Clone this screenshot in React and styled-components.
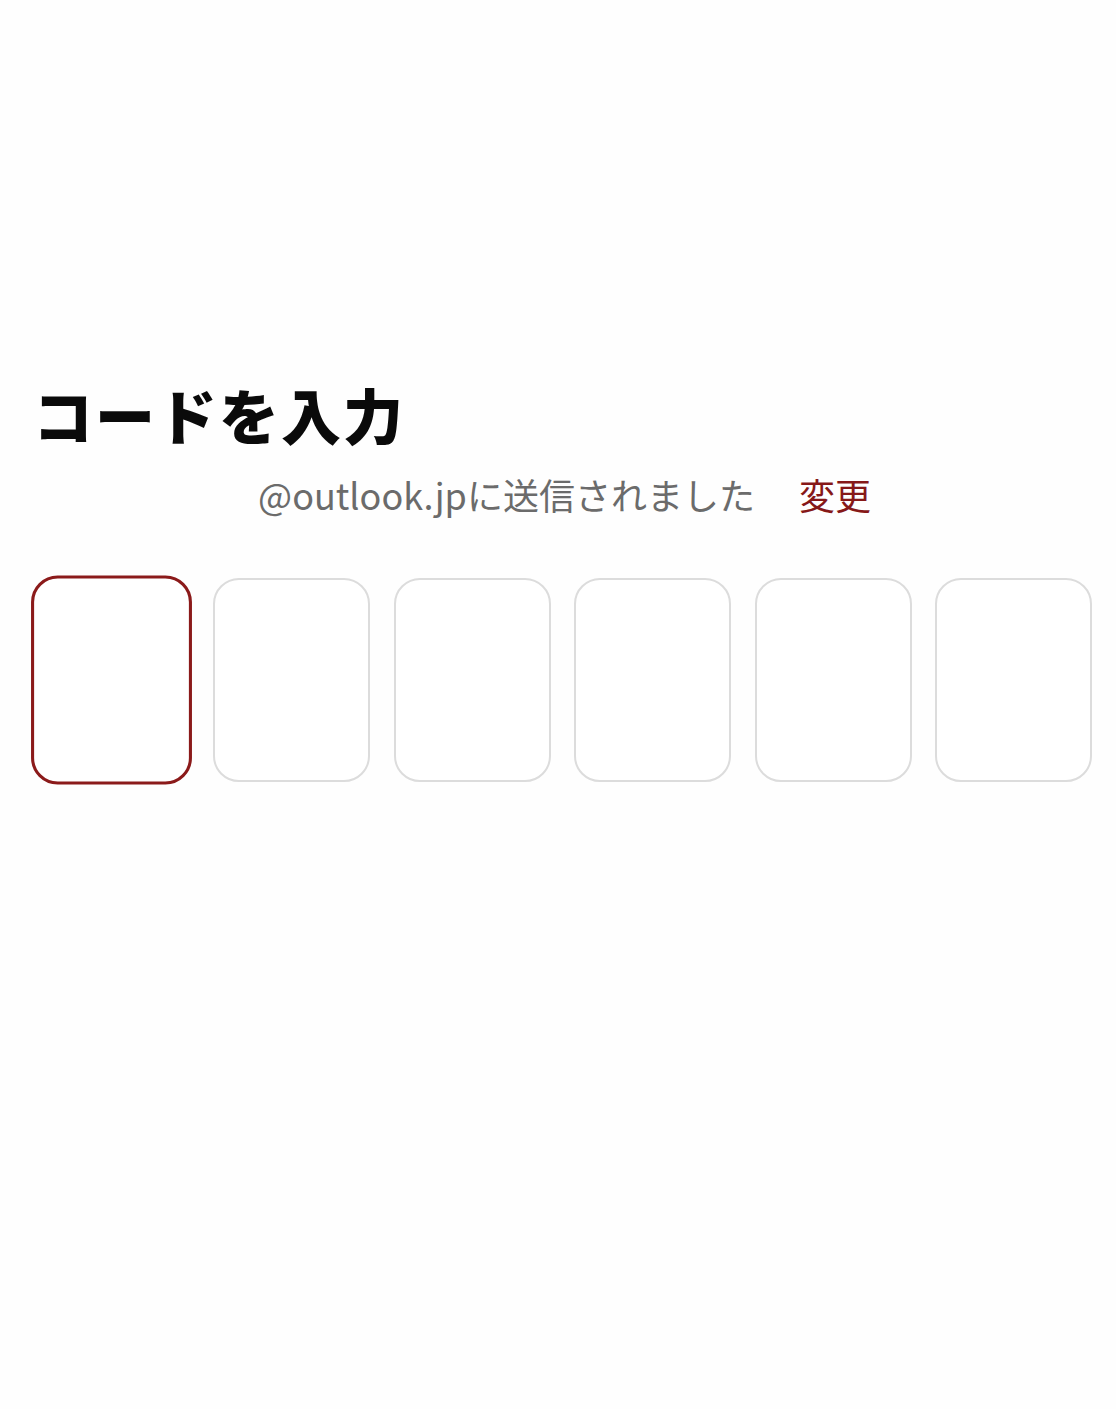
import React from 'react'
import styled, { createGlobalStyle } from 'styled-components'

const GlobalStyle = createGlobalStyle`
  html, body {
    margin: 0;
    padding: 0;
    background: #fefefe;
  }
  body {
    font-family: "Noto Sans CJK JP", "Noto Sans", sans-serif;
  }
`;

const Page = styled.div`
  min-height: 1409px;
  padding: 378px 24px 0 33px;
  box-sizing: border-box;
`;

const Title = styled.h1`
  margin: 0;
  font-size: 60px;
  font-weight: 900;
  line-height: 1.2;
  color: #0a0a0a;
  letter-spacing: 2px;
`;

const Sub = styled.p`
  margin: 21px 0 0;
  padding-left: 4px;
  text-align: center;
  font-size: 36px;
  line-height: 1.3;
  color: #6b6b6b;
`;

const Change = styled.span`
  margin-left: 44px;
  color: #861818;
`;

const CodeRow = styled.div`
  display: flex;
  gap: 23.5px;
  margin-top: 60px;
`;

const CodeBox = styled.div`
  width: 157px;
  height: 204px;
  box-sizing: border-box;
  border-radius: 26px;
  border: ${props => props.active ? '3px solid #8b1a1a' : '2.5px solid #dcdcdc'};
  background: #fff;
  transform: ${props => props.active ? 'scale(1.025)' : 'none'};
`;

export default function App() {
  return (
    <Page>
      <GlobalStyle />
      <Title>コードを入力</Title>
      <Sub>
        @outlook.jpに送信されました<Change>変更</Change>
      </Sub>
      <CodeRow>
        {[0, 1, 2, 3, 4, 5].map(i => (
          <CodeBox key={i} active={i === 0} />
        ))}
      </CodeRow>
    </Page>
  )
}
